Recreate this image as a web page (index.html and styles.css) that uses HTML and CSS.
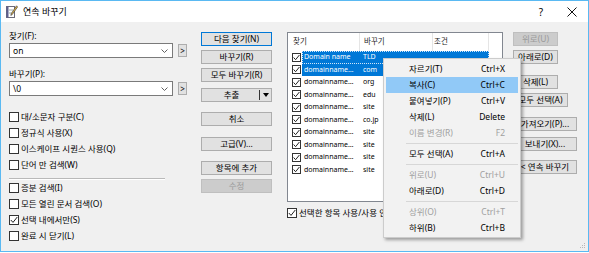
FILE: index.html
```html
<!DOCTYPE html>
<html lang="ko">
<head>
<meta charset="utf-8">
<title>연속 바꾸기</title>
<link rel="stylesheet" href="styles.css">
</head>
<body>
<div class="window">
  <div class="titlebar">
    <svg class="app-icon" width="12" height="13" viewBox="0 0 12 13">
      <rect x="0.5" y="1.5" width="8" height="11" fill="#fff" stroke="#6b6b7a"/>
      <rect x="0.5" y="1.5" width="2" height="11" fill="#5d5f8e"/>
      <line x1="3" y1="5" x2="7" y2="5" stroke="#9aa" stroke-width="1"/>
      <line x1="3" y1="8" x2="6" y2="8" stroke="#9aa" stroke-width="1"/>
      <path d="M10.5 0.8 L11.6 1.9 L6.2 9.6 L4.8 10.4 L5.2 8.8 Z" fill="#f2c23a" stroke="#3b3b4a" stroke-width="0.7"/>
    </svg>
    <span class="title">연속 바꾸기</span>
    <span class="tb-help">?</span>
    <svg class="tb-close" width="10" height="10" viewBox="0 0 10 10">
      <path d="M0.5 0.5 L9.5 9.5 M9.5 0.5 L0.5 9.5" stroke="#111" stroke-width="1" fill="none"/>
    </svg>
  </div>

  <div class="content">
    <div class="col-left">
      <div class="label">찾기(F):</div>
      <div class="combo-row">
        <div class="combo"><span class="combo-text">on</span>
          <svg class="chev" width="7" height="4" viewBox="0 0 7 4"><path d="M0.5 0.5 L3.5 3.5 L6.5 0.5" stroke="#606060" fill="none"/></svg>
        </div>
        <div class="arrow-btn">&gt;</div>
      </div>
      <div class="label label2">바꾸기(P):</div>
      <div class="combo-row">
        <div class="combo"><span class="combo-text">\0</span>
          <svg class="chev" width="7" height="4" viewBox="0 0 7 4"><path d="M0.5 0.5 L3.5 3.5 L6.5 0.5" stroke="#606060" fill="none"/></svg>
        </div>
        <div class="arrow-btn">&gt;</div>
      </div>

      <div class="checks checks1">
        <div class="chk"><span class="box"></span>대/소문자 구분(C)</div>
        <div class="chk"><span class="box"></span>정규식 사용(X)</div>
        <div class="chk"><span class="box"></span>이스케이프 시퀀스 사용(Q)</div>
        <div class="chk"><span class="box"></span>단어 만 검색(W)</div>
      </div>
      <div class="sep"></div>
      <div class="checks">
        <div class="chk"><span class="box"></span>증분 검색(I)</div>
        <div class="chk"><span class="box"></span>모든 열린 문서 검색(O)</div>
        <div class="chk"><span class="box checked"><svg width="8" height="8" viewBox="0 0 8 8"><path d="M0.8 4 L3 6.4 L7.3 1" stroke="#222" fill="none" stroke-width="1"/></svg></span>선택 내에서만(S)</div>
        <div class="chk"><span class="box"></span>완료 시 닫기(L)</div>
      </div>
    </div>

    <div class="col-mid">
      <div class="btn default">다음 찾기(N)</div>
      <div class="btn">바꾸기(R)</div>
      <div class="btn">모두 바꾸기(R)</div>
      <div class="btn split extra2"><span class="split-label">추출</span><span class="split-div"></span><span class="split-arrow"></span></div>
      <div class="btn extra6">취소</div>
      <div class="btn extra7">고급(V)...</div>
      <div class="btn extra6">항목에 추가</div>
      <div class="btn disabled">수정</div>
    </div>

    <div class="col-list">
      <div class="list">
        <div class="list-head">
          <span class="h c1">찾기</span>
          <span class="h c2">바꾸기</span>
          <span class="h c3">조건</span>
        </div>
        <div class="row sel focus"><span class="lbox"><span class="mini"><svg width="7" height="7" viewBox="0 0 7 7"><path d="M0.6 3.5 L2.6 5.7 L6.4 1" stroke="#222" fill="none"/></svg></span></span><span class="cells"><span class="c1">Domain name</span><span class="c2">TLD</span><span class="c3"></span></span></div>
        <div class="row sel"><span class="lbox"><span class="mini"><svg width="7" height="7" viewBox="0 0 7 7"><path d="M0.6 3.5 L2.6 5.7 L6.4 1" stroke="#222" fill="none"/></svg></span></span><span class="cells"><span class="c1">domainname…</span><span class="c2">com</span><span class="c3"></span></span></div>
        <div class="row"><span class="lbox"><span class="mini"><svg width="7" height="7" viewBox="0 0 7 7"><path d="M0.6 3.5 L2.6 5.7 L6.4 1" stroke="#222" fill="none"/></svg></span></span><span class="cells"><span class="c1">domainname…</span><span class="c2">org</span><span class="c3"></span></span></div>
        <div class="row"><span class="lbox"><span class="mini"><svg width="7" height="7" viewBox="0 0 7 7"><path d="M0.6 3.5 L2.6 5.7 L6.4 1" stroke="#222" fill="none"/></svg></span></span><span class="cells"><span class="c1">domainname…</span><span class="c2">edu</span><span class="c3"></span></span></div>
        <div class="row"><span class="lbox"><span class="mini"><svg width="7" height="7" viewBox="0 0 7 7"><path d="M0.6 3.5 L2.6 5.7 L6.4 1" stroke="#222" fill="none"/></svg></span></span><span class="cells"><span class="c1">domainname…</span><span class="c2">site</span><span class="c3"></span></span></div>
        <div class="row"><span class="lbox"><span class="mini"><svg width="7" height="7" viewBox="0 0 7 7"><path d="M0.6 3.5 L2.6 5.7 L6.4 1" stroke="#222" fill="none"/></svg></span></span><span class="cells"><span class="c1">domainname…</span><span class="c2">co.jp</span><span class="c3"></span></span></div>
        <div class="row"><span class="lbox"><span class="mini"><svg width="7" height="7" viewBox="0 0 7 7"><path d="M0.6 3.5 L2.6 5.7 L6.4 1" stroke="#222" fill="none"/></svg></span></span><span class="cells"><span class="c1">domainname…</span><span class="c2">site</span><span class="c3"></span></span></div>
        <div class="row"><span class="lbox"><span class="mini"><svg width="7" height="7" viewBox="0 0 7 7"><path d="M0.6 3.5 L2.6 5.7 L6.4 1" stroke="#222" fill="none"/></svg></span></span><span class="cells"><span class="c1">domainname…</span><span class="c2">site</span><span class="c3"></span></span></div>
        <div class="row"><span class="lbox"><span class="mini"><svg width="7" height="7" viewBox="0 0 7 7"><path d="M0.6 3.5 L2.6 5.7 L6.4 1" stroke="#222" fill="none"/></svg></span></span><span class="cells"><span class="c1">domainname…</span><span class="c2">site</span><span class="c3"></span></span></div>
        <div class="row"><span class="lbox"><span class="mini"><svg width="7" height="7" viewBox="0 0 7 7"><path d="M0.6 3.5 L2.6 5.7 L6.4 1" stroke="#222" fill="none"/></svg></span></span><span class="cells"><span class="c1">domainname…</span><span class="c2">site</span><span class="c3"></span></span></div>
      </div>
      <div class="chk under"><span class="box checked"><svg width="8" height="8" viewBox="0 0 8 8"><path d="M0.8 4 L3 6.4 L7.3 1" stroke="#222" fill="none" stroke-width="1"/></svg></span>선택한 항목 사용/사용 안 함</div>
    </div>

    <div class="col-right">
      <div class="btn disabled w45">위로(U)</div>
      <div class="btn w45">아래로(D)</div>
      <div class="btn w45 r-gap11">삭제(L)</div>
      <div class="btn w55">모두 선택(A)</div>
      <div class="btn w64 r-gap10">가져오기(P)...</div>
      <div class="btn w64 r-gap6">보내기(X)...</div>
      <div class="btn w64 r-gap9">&lt; 연속 바꾸기</div>
    </div>
  </div>

  <div class="menu">
    <div class="mi"><span>자르기(T)</span><span class="sc">Ctrl+X</span></div>
    <div class="mi hot"><span>복사(C)</span><span class="sc">Ctrl+C</span></div>
    <div class="mi"><span>붙여넣기(P)</span><span class="sc">Ctrl+V</span></div>
    <div class="mi"><span>삭제(L)</span><span class="sc">Delete</span></div>
    <div class="mi off"><span>이름 변경(R)</span><span class="sc">F2</span></div>
    <div class="msep"></div>
    <div class="mi"><span>모두 선택(A)</span><span class="sc">Ctrl+A</span></div>
    <div class="msep"></div>
    <div class="mi off"><span>위로(U)</span><span class="sc">Ctrl+U</span></div>
    <div class="mi"><span>아래로(D)</span><span class="sc">Ctrl+D</span></div>
    <div class="msep"></div>
    <div class="mi off"><span>상위(O)</span><span class="sc">Ctrl+T</span></div>
    <div class="mi"><span>하위(B)</span><span class="sc">Ctrl+B</span></div>
  </div>

  <svg class="grip" width="6" height="6" viewBox="0 0 6 6">
    <rect x="4" y="0" width="1" height="1" fill="#b8b8b8"/>
    <rect x="2" y="2" width="1" height="1" fill="#b8b8b8"/>
    <rect x="4" y="2" width="1" height="1" fill="#b8b8b8"/>
    <rect x="0" y="4" width="1" height="1" fill="#b8b8b8"/>
    <rect x="2" y="4" width="1" height="1" fill="#b8b8b8"/>
    <rect x="4" y="4" width="1" height="1" fill="#b8b8b8"/>
  </svg>
</div>
</body>
</html>
```

FILE: styles.css
```css
* { box-sizing: border-box; }
html, body { margin: 0; padding: 0; background: #ffffff; }
body {
  font-family: "Noto Sans", "Noto Sans CJK KR", sans-serif;
  font-size: 8.5px;
  color: #000;
}

.window {
  position: relative;
  width: 589px;
  height: 252px;
  border: 1px solid #5ab9f2;
  background: #f0f0f0;
  display: flex;
  flex-direction: column;
  overflow: hidden;
}

/* title bar */
.titlebar {
  flex: none;
  height: 21px;
  background: #fff;
  display: flex;
  align-items: center;
}
.app-icon { margin-left: 5px; flex: none; }
.title { margin-left: 5px; font-size: 9px; line-height: 12px; }
.tb-help { margin-left: auto; font-size: 10px; line-height: 12px; width: 8px; text-align: center; }
.tb-close { margin-left: 22px; margin-right: 11px; }

/* content */
.content {
  flex: 1;
  display: flex;
  padding-left: 8px;
}

.col-left { width: 178px; padding-top: 8px; flex: none; }
.label { height: 12px; line-height: 12px; margin-bottom: 1px; }
.label2 { margin-top: 10px; }
.combo-row { display: flex; height: 15px; }
.combo {
  width: 164px;
  height: 15px;
  background: #fff;
  border: 1px solid #7a7a7a;
  display: flex;
  align-items: center;
  padding-left: 3px;
  padding-right: 4px;
}
.combo-text { line-height: 12px; flex: 1; }
.chev { flex: none; }
.arrow-btn {
  margin-left: 5px;
  margin-top: 1px;
  width: 9px;
  height: 13px;
  background: #e1e1e1;
  border: 1px solid #adadad;
  font-size: 8px;
  line-height: 11px;
  text-align: center;
}

.checks1 { margin-top: 13px; }
.chk {
  height: 16px;
  display: flex;
  align-items: center;
  line-height: 12px;
  white-space: nowrap;
}
.box {
  width: 10px;
  height: 10px;
  border: 1px solid #333;
  background: #fff;
  margin-right: 2px;
  flex: none;
  display: flex;
  align-items: center;
  justify-content: center;
}
.sep {
  margin-top: 5px;
  width: 156px;
  height: 2px;
  border-top: 1px solid #b9b9b9;
  border-bottom: 1px solid #fff;
}

/* middle buttons */
.col-mid {
  margin-left: 14px;
  width: 71px;
  flex: none;
  padding-top: 10px;
  display: flex;
  flex-direction: column;
  gap: 4px;
}
.btn {
  height: 14px;
  background: #e1e1e1;
  border: 1px solid #adadad;
  text-align: center;
  line-height: 12px;
  white-space: nowrap;
}
.btn.default { border-color: #0078d7; }
.btn.disabled { background: #cccccc; border-color: #bfbfbf; color: #9a9a9a; }
.extra2 { margin-top: 2px; }
.extra6 { margin-top: 6px; }
.extra7 { margin-top: 7px; }

.split { display: flex; align-items: center; padding: 0; }
.split-label { flex: 1; text-align: center; padding-left: 2px; }
.split-div { width: 1px; height: 10px; background: #333; margin-right: 3px; }
.split-arrow {
  width: 0; height: 0;
  border-left: 3px solid transparent;
  border-right: 3px solid transparent;
  border-top: 4px solid #000;
  margin-right: 2px;
}

/* list */
.col-list {
  margin-left: 15px;
  width: 216px;
  flex: none;
  padding-top: 10px;
}
.list {
  height: 170px;
  background: #fff;
  border: 1px solid #828790;
  overflow: hidden;
  font-size: 7px;
}
.list-head {
  display: flex;
  height: 18px;
  font-size: 7.5px;
}
.list-head .h {
  line-height: 14px;
  padding-top: 1px;
  border-right: 1px solid #e5e5e5;
  color: #1e1e1e;
}
.list-head .c1 { width: 72px; padding-left: 5px; }
.list-head .c2 { width: 73px; padding-left: 4px; }
.list-head .c3 { width: 56px; padding-left: 1px; }

.row {
  display: flex;
  height: 12.5px;
  line-height: 12.5px;
  white-space: nowrap;
}
.lbox {
  width: 14px;
  flex: none;
  display: flex;
  align-items: center;
  padding-left: 4px;
}
.mini {
  width: 9px;
  height: 9px;
  border: 1px solid #333;
  background: #fff;
  display: flex;
  align-items: center;
  justify-content: center;
}
.cells { display: flex; width: 187px; }
.cells span { overflow: hidden; }
.cells .c1 { width: 58px; padding-left: 2px; }
.cells .c2 { width: 73px; padding-left: 3px; }
.cells .c3 { width: 56px; }
.row.sel .cells { background: #0078d7; color: #fff; }
.row.focus .cells { outline: 1px dotted #cfe5f8; outline-offset: -1px; }

.chk.under { margin-top: 5px; height: 12px; }

/* right column */
.col-right {
  margin-left: 10px;
  width: 65px;
  flex: none;
  padding-top: 10px;
  display: flex;
  flex-direction: column;
  align-items: flex-start;
  gap: 4px;
}
.w45 { width: 45px; }
.w55 { width: 55px; }
.w64 { width: 64px; }
.r-gap11 { margin-top: 7px; }
.r-gap10 { margin-top: 6px; }
.r-gap6 { margin-top: 2px; }
.r-gap9 { margin-top: 5px; }

/* context menu (overlay) */
.menu {
  position: absolute;
  left: 382px;
  top: 57px;
  width: 138px;
  height: 180px;
  background: #f2f2f2;
  border: 1px solid #cccccc;
  padding: 2px 2px 2px 2px;
  box-shadow: 2px 2px 3px rgba(0, 0, 0, 0.35);
}
.mi {
  height: 16px;
  display: flex;
  align-items: center;
  justify-content: space-between;
  padding-left: 23px;
  padding-right: 13px;
  line-height: 12px;
}
.mi.hot { background: #91c9f7; }
.mi.off { color: #a0a0a0; }
.msep {
  height: 5px;
  margin-left: 20px;
  border-top: 2px solid transparent;
  position: relative;
}
.msep::after {
  content: "";
  display: block;
  height: 1px;
  background: #d7d7d7;
}

.grip { position: absolute; right: 2px; bottom: 2px; }
```
